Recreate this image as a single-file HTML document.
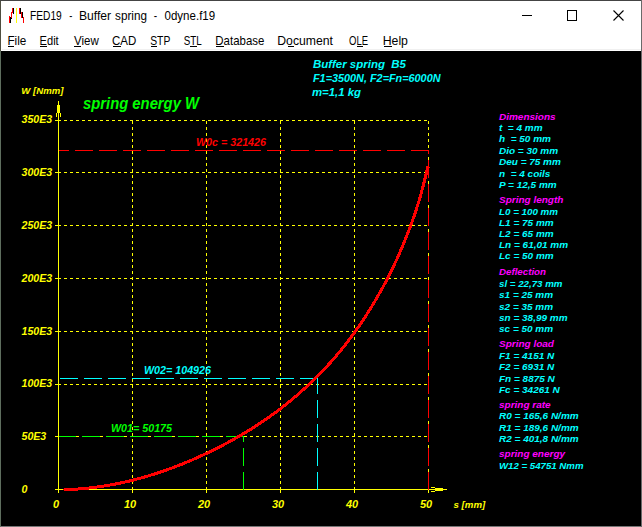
<!DOCTYPE html>
<html><head><meta charset="utf-8"><style>
html,body{margin:0;padding:0;width:642px;height:527px;overflow:hidden;background:#5e6e5e}
svg{position:absolute;left:0;top:0;display:block}
text{font-family:"Liberation Sans",sans-serif;white-space:pre}
</style></head><body>
<svg width="642" height="527" viewBox="0 0 642 527">
<rect x="0" y="0" width="642" height="527" fill="#5e6e5e"/>
<rect x="0" y="0" width="642" height="1" fill="#444"/>
<rect x="0" y="526" width="642" height="1" fill="#767676"/>
<rect x="0" y="1" width="1" height="50" fill="#4e4e40"/>
<rect x="0" y="51" width="1" height="476" fill="#5e6e5e"/>
<rect x="641" y="0" width="1" height="527" fill="#6a6a6a"/>
<rect x="1" y="1" width="640" height="50" fill="#fff"/>
<rect x="2" y="49" width="639" height="1" fill="#f0f0f0"/>
<rect x="1" y="51" width="640" height="475" fill="#000"/>
<g shape-rendering="crispEdges"><rect x="9" y="16" width="1" height="7" fill="#f00"/><rect x="10" y="17" width="1" height="6" fill="#000"/><rect x="11" y="12" width="1" height="6" fill="#f00"/><rect x="12" y="12" width="1" height="1" fill="#f00"/><rect x="12" y="8" width="1" height="5" fill="#f00"/><rect x="13" y="8" width="1" height="6" fill="#000"/><rect x="11" y="18" width="1" height="1" fill="#000"/><rect x="16" y="8" width="1" height="15" fill="#ff0"/><rect x="19" y="8" width="1" height="6" fill="#f00"/><rect x="20" y="8" width="1" height="6" fill="#000"/><rect x="21" y="12" width="1" height="6" fill="#f00"/><rect x="22" y="12" width="1" height="6" fill="#000"/><rect x="23" y="17" width="1" height="6" fill="#f00"/></g>
<g shape-rendering="crispEdges" fill="#000">
<rect x="522" y="15" width="10" height="1"/>
<rect x="567" y="10" width="10" height="1"/><rect x="567" y="20" width="10" height="1"/><rect x="567" y="10" width="1" height="11"/><rect x="576" y="10" width="1" height="11"/>
</g>
<path d="M613.5 10.5L623.5 20.5M623.5 10.5L613.5 20.5" stroke="#000" stroke-width="1.1"/>
<g font-size="12" fill="#000">
<text transform="translate(29.95,20) scale(0.853,1)">FED19</text>
<text transform="translate(69.3,20) scale(0.775,1)">-</text>
<text transform="translate(78.89,20) scale(1.013,1)">Buffer</text>
<text transform="translate(115.1,20) scale(0.975,1)">spring</text>
<text transform="translate(153.7,20) scale(0.85,1)">-</text>
<text transform="translate(164.5,20) scale(0.962,1)">0dyne.f19</text>
<text transform="translate(7.42,45) scale(0.978,1)">File</text>
<text transform="translate(39.58,45) scale(0.925,1)">Edit</text>
<text transform="translate(74.0,45) scale(0.962,1)">View</text>
<text transform="translate(112.04,45) scale(0.958,1)">CAD</text>
<text transform="translate(150.14,45) scale(0.864,1)">STP</text>
<text transform="translate(183.68,45) scale(0.819,1)">STL</text>
<text transform="translate(215.35,45) scale(0.954,1)">Database</text>
<text transform="translate(277.28,45) scale(1.019,1)">Document</text>
<text transform="translate(349.0,45) scale(0.792,1)">OLE</text>
<text transform="translate(382.67,45) scale(1.026,1)">Help</text>
<rect x="8" y="46" width="6" height="1"/>
<rect x="40" y="46" width="7" height="1"/>
<rect x="74" y="46" width="7" height="1"/>
<rect x="113" y="46" width="8" height="1"/>
<rect x="151" y="46" width="6" height="1"/>
<rect x="190" y="46" width="7" height="1"/>
<rect x="216" y="46" width="8" height="1"/>
<rect x="288" y="46" width="6" height="1"/>
<rect x="357" y="46" width="6" height="1"/>
<rect x="384" y="46" width="8" height="1"/>
</g>
<g shape-rendering="crispEdges">
<path fill="#ffff00" d="M55 120h6v1h-6zM64 120h3v1h-3zM70 120h3v1h-3zM76 120h3v1h-3zM82 120h3v1h-3zM88 120h3v1h-3zM94 120h3v1h-3zM100 120h3v1h-3zM106 120h3v1h-3zM112 120h3v1h-3zM118 120h3v1h-3zM124 120h3v1h-3zM130 120h3v1h-3zM136 120h3v1h-3zM142 120h3v1h-3zM148 120h3v1h-3zM154 120h3v1h-3zM160 120h3v1h-3zM166 120h3v1h-3zM172 120h3v1h-3zM178 120h3v1h-3zM184 120h3v1h-3zM190 120h3v1h-3zM196 120h3v1h-3zM202 120h3v1h-3zM208 120h3v1h-3zM214 120h3v1h-3zM220 120h3v1h-3zM226 120h3v1h-3zM232 120h3v1h-3zM238 120h3v1h-3zM244 120h3v1h-3zM250 120h3v1h-3zM256 120h3v1h-3zM262 120h3v1h-3zM268 120h3v1h-3zM274 120h3v1h-3zM280 120h3v1h-3zM286 120h3v1h-3zM292 120h3v1h-3zM298 120h3v1h-3zM304 120h3v1h-3zM310 120h3v1h-3zM316 120h3v1h-3zM322 120h3v1h-3zM328 120h3v1h-3zM334 120h3v1h-3zM340 120h3v1h-3zM346 120h3v1h-3zM352 120h3v1h-3zM358 120h3v1h-3zM364 120h3v1h-3zM370 120h3v1h-3zM376 120h3v1h-3zM382 120h3v1h-3zM388 120h3v1h-3zM394 120h3v1h-3zM400 120h3v1h-3zM406 120h3v1h-3zM412 120h3v1h-3zM418 120h3v1h-3zM424 120h3v1h-3zM55 172h6v1h-6zM64 172h3v1h-3zM70 172h3v1h-3zM76 172h3v1h-3zM82 172h3v1h-3zM88 172h3v1h-3zM94 172h3v1h-3zM100 172h3v1h-3zM106 172h3v1h-3zM112 172h3v1h-3zM118 172h3v1h-3zM124 172h3v1h-3zM130 172h3v1h-3zM136 172h3v1h-3zM142 172h3v1h-3zM148 172h3v1h-3zM154 172h3v1h-3zM160 172h3v1h-3zM166 172h3v1h-3zM172 172h3v1h-3zM178 172h3v1h-3zM184 172h3v1h-3zM190 172h3v1h-3zM196 172h3v1h-3zM202 172h3v1h-3zM208 172h3v1h-3zM214 172h3v1h-3zM220 172h3v1h-3zM226 172h3v1h-3zM232 172h3v1h-3zM238 172h3v1h-3zM244 172h3v1h-3zM250 172h3v1h-3zM256 172h3v1h-3zM262 172h3v1h-3zM268 172h3v1h-3zM274 172h3v1h-3zM280 172h3v1h-3zM286 172h3v1h-3zM292 172h3v1h-3zM298 172h3v1h-3zM304 172h3v1h-3zM310 172h3v1h-3zM316 172h3v1h-3zM322 172h3v1h-3zM328 172h3v1h-3zM334 172h3v1h-3zM340 172h3v1h-3zM346 172h3v1h-3zM352 172h3v1h-3zM358 172h3v1h-3zM364 172h3v1h-3zM370 172h3v1h-3zM376 172h3v1h-3zM382 172h3v1h-3zM388 172h3v1h-3zM394 172h3v1h-3zM400 172h3v1h-3zM406 172h3v1h-3zM412 172h3v1h-3zM418 172h3v1h-3zM424 172h3v1h-3zM55 225h6v1h-6zM64 225h3v1h-3zM70 225h3v1h-3zM76 225h3v1h-3zM82 225h3v1h-3zM88 225h3v1h-3zM94 225h3v1h-3zM100 225h3v1h-3zM106 225h3v1h-3zM112 225h3v1h-3zM118 225h3v1h-3zM124 225h3v1h-3zM130 225h3v1h-3zM136 225h3v1h-3zM142 225h3v1h-3zM148 225h3v1h-3zM154 225h3v1h-3zM160 225h3v1h-3zM166 225h3v1h-3zM172 225h3v1h-3zM178 225h3v1h-3zM184 225h3v1h-3zM190 225h3v1h-3zM196 225h3v1h-3zM202 225h3v1h-3zM208 225h3v1h-3zM214 225h3v1h-3zM220 225h3v1h-3zM226 225h3v1h-3zM232 225h3v1h-3zM238 225h3v1h-3zM244 225h3v1h-3zM250 225h3v1h-3zM256 225h3v1h-3zM262 225h3v1h-3zM268 225h3v1h-3zM274 225h3v1h-3zM280 225h3v1h-3zM286 225h3v1h-3zM292 225h3v1h-3zM298 225h3v1h-3zM304 225h3v1h-3zM310 225h3v1h-3zM316 225h3v1h-3zM322 225h3v1h-3zM328 225h3v1h-3zM334 225h3v1h-3zM340 225h3v1h-3zM346 225h3v1h-3zM352 225h3v1h-3zM358 225h3v1h-3zM364 225h3v1h-3zM370 225h3v1h-3zM376 225h3v1h-3zM382 225h3v1h-3zM388 225h3v1h-3zM394 225h3v1h-3zM400 225h3v1h-3zM406 225h3v1h-3zM412 225h3v1h-3zM418 225h3v1h-3zM424 225h3v1h-3zM55 278h6v1h-6zM64 278h3v1h-3zM70 278h3v1h-3zM76 278h3v1h-3zM82 278h3v1h-3zM88 278h3v1h-3zM94 278h3v1h-3zM100 278h3v1h-3zM106 278h3v1h-3zM112 278h3v1h-3zM118 278h3v1h-3zM124 278h3v1h-3zM130 278h3v1h-3zM136 278h3v1h-3zM142 278h3v1h-3zM148 278h3v1h-3zM154 278h3v1h-3zM160 278h3v1h-3zM166 278h3v1h-3zM172 278h3v1h-3zM178 278h3v1h-3zM184 278h3v1h-3zM190 278h3v1h-3zM196 278h3v1h-3zM202 278h3v1h-3zM208 278h3v1h-3zM214 278h3v1h-3zM220 278h3v1h-3zM226 278h3v1h-3zM232 278h3v1h-3zM238 278h3v1h-3zM244 278h3v1h-3zM250 278h3v1h-3zM256 278h3v1h-3zM262 278h3v1h-3zM268 278h3v1h-3zM274 278h3v1h-3zM280 278h3v1h-3zM286 278h3v1h-3zM292 278h3v1h-3zM298 278h3v1h-3zM304 278h3v1h-3zM310 278h3v1h-3zM316 278h3v1h-3zM322 278h3v1h-3zM328 278h3v1h-3zM334 278h3v1h-3zM340 278h3v1h-3zM346 278h3v1h-3zM352 278h3v1h-3zM358 278h3v1h-3zM364 278h3v1h-3zM370 278h3v1h-3zM376 278h3v1h-3zM382 278h3v1h-3zM388 278h3v1h-3zM394 278h3v1h-3zM400 278h3v1h-3zM406 278h3v1h-3zM412 278h3v1h-3zM418 278h3v1h-3zM424 278h3v1h-3zM55 331h6v1h-6zM64 331h3v1h-3zM70 331h3v1h-3zM76 331h3v1h-3zM82 331h3v1h-3zM88 331h3v1h-3zM94 331h3v1h-3zM100 331h3v1h-3zM106 331h3v1h-3zM112 331h3v1h-3zM118 331h3v1h-3zM124 331h3v1h-3zM130 331h3v1h-3zM136 331h3v1h-3zM142 331h3v1h-3zM148 331h3v1h-3zM154 331h3v1h-3zM160 331h3v1h-3zM166 331h3v1h-3zM172 331h3v1h-3zM178 331h3v1h-3zM184 331h3v1h-3zM190 331h3v1h-3zM196 331h3v1h-3zM202 331h3v1h-3zM208 331h3v1h-3zM214 331h3v1h-3zM220 331h3v1h-3zM226 331h3v1h-3zM232 331h3v1h-3zM238 331h3v1h-3zM244 331h3v1h-3zM250 331h3v1h-3zM256 331h3v1h-3zM262 331h3v1h-3zM268 331h3v1h-3zM274 331h3v1h-3zM280 331h3v1h-3zM286 331h3v1h-3zM292 331h3v1h-3zM298 331h3v1h-3zM304 331h3v1h-3zM310 331h3v1h-3zM316 331h3v1h-3zM322 331h3v1h-3zM328 331h3v1h-3zM334 331h3v1h-3zM340 331h3v1h-3zM346 331h3v1h-3zM352 331h3v1h-3zM358 331h3v1h-3zM364 331h3v1h-3zM370 331h3v1h-3zM376 331h3v1h-3zM382 331h3v1h-3zM388 331h3v1h-3zM394 331h3v1h-3zM400 331h3v1h-3zM406 331h3v1h-3zM412 331h3v1h-3zM418 331h3v1h-3zM424 331h3v1h-3zM55 384h6v1h-6zM64 384h3v1h-3zM70 384h3v1h-3zM76 384h3v1h-3zM82 384h3v1h-3zM88 384h3v1h-3zM94 384h3v1h-3zM100 384h3v1h-3zM106 384h3v1h-3zM112 384h3v1h-3zM118 384h3v1h-3zM124 384h3v1h-3zM130 384h3v1h-3zM136 384h3v1h-3zM142 384h3v1h-3zM148 384h3v1h-3zM154 384h3v1h-3zM160 384h3v1h-3zM166 384h3v1h-3zM172 384h3v1h-3zM178 384h3v1h-3zM184 384h3v1h-3zM190 384h3v1h-3zM196 384h3v1h-3zM202 384h3v1h-3zM208 384h3v1h-3zM214 384h3v1h-3zM220 384h3v1h-3zM226 384h3v1h-3zM232 384h3v1h-3zM238 384h3v1h-3zM244 384h3v1h-3zM250 384h3v1h-3zM256 384h3v1h-3zM262 384h3v1h-3zM268 384h3v1h-3zM274 384h3v1h-3zM280 384h3v1h-3zM286 384h3v1h-3zM292 384h3v1h-3zM298 384h3v1h-3zM304 384h3v1h-3zM310 384h3v1h-3zM316 384h3v1h-3zM322 384h3v1h-3zM328 384h3v1h-3zM334 384h3v1h-3zM340 384h3v1h-3zM346 384h3v1h-3zM352 384h3v1h-3zM358 384h3v1h-3zM364 384h3v1h-3zM370 384h3v1h-3zM376 384h3v1h-3zM382 384h3v1h-3zM388 384h3v1h-3zM394 384h3v1h-3zM400 384h3v1h-3zM406 384h3v1h-3zM412 384h3v1h-3zM418 384h3v1h-3zM424 384h3v1h-3zM55 436h6v1h-6zM64 436h3v1h-3zM70 436h3v1h-3zM76 436h3v1h-3zM82 436h3v1h-3zM88 436h3v1h-3zM94 436h3v1h-3zM100 436h3v1h-3zM106 436h3v1h-3zM112 436h3v1h-3zM118 436h3v1h-3zM124 436h3v1h-3zM130 436h3v1h-3zM136 436h3v1h-3zM142 436h3v1h-3zM148 436h3v1h-3zM154 436h3v1h-3zM160 436h3v1h-3zM166 436h3v1h-3zM172 436h3v1h-3zM178 436h3v1h-3zM184 436h3v1h-3zM190 436h3v1h-3zM196 436h3v1h-3zM202 436h3v1h-3zM208 436h3v1h-3zM214 436h3v1h-3zM220 436h3v1h-3zM226 436h3v1h-3zM232 436h3v1h-3zM238 436h3v1h-3zM244 436h3v1h-3zM250 436h3v1h-3zM256 436h3v1h-3zM262 436h3v1h-3zM268 436h3v1h-3zM274 436h3v1h-3zM280 436h3v1h-3zM286 436h3v1h-3zM292 436h3v1h-3zM298 436h3v1h-3zM304 436h3v1h-3zM310 436h3v1h-3zM316 436h3v1h-3zM322 436h3v1h-3zM328 436h3v1h-3zM334 436h3v1h-3zM340 436h3v1h-3zM346 436h3v1h-3zM352 436h3v1h-3zM358 436h3v1h-3zM364 436h3v1h-3zM370 436h3v1h-3zM376 436h3v1h-3zM382 436h3v1h-3zM388 436h3v1h-3zM394 436h3v1h-3zM400 436h3v1h-3zM406 436h3v1h-3zM412 436h3v1h-3zM418 436h3v1h-3zM424 436h3v1h-3zM132 489h1v4h-1zM132 121h1v3h-1zM132 127h1v3h-1zM132 133h1v3h-1zM132 139h1v3h-1zM132 145h1v3h-1zM132 151h1v3h-1zM132 157h1v3h-1zM132 163h1v3h-1zM132 169h1v3h-1zM132 175h1v3h-1zM132 181h1v3h-1zM132 187h1v3h-1zM132 193h1v3h-1zM132 199h1v3h-1zM132 205h1v3h-1zM132 211h1v3h-1zM132 217h1v3h-1zM132 223h1v3h-1zM132 229h1v3h-1zM132 235h1v3h-1zM132 241h1v3h-1zM132 247h1v3h-1zM132 253h1v3h-1zM132 259h1v3h-1zM132 265h1v3h-1zM132 271h1v3h-1zM132 277h1v3h-1zM132 283h1v3h-1zM132 289h1v3h-1zM132 295h1v3h-1zM132 301h1v3h-1zM132 307h1v3h-1zM132 313h1v3h-1zM132 319h1v3h-1zM132 325h1v3h-1zM132 331h1v3h-1zM132 337h1v3h-1zM132 343h1v3h-1zM132 349h1v3h-1zM132 355h1v3h-1zM132 361h1v3h-1zM132 367h1v3h-1zM132 373h1v3h-1zM132 379h1v3h-1zM132 385h1v3h-1zM132 391h1v3h-1zM132 397h1v3h-1zM132 403h1v3h-1zM132 409h1v3h-1zM132 415h1v3h-1zM132 421h1v3h-1zM132 427h1v3h-1zM132 433h1v3h-1zM132 439h1v3h-1zM132 445h1v3h-1zM132 451h1v3h-1zM132 457h1v3h-1zM132 463h1v3h-1zM132 469h1v3h-1zM132 475h1v3h-1zM132 481h1v3h-1zM132 487h1v2h-1zM206 489h1v4h-1zM206 121h1v3h-1zM206 127h1v3h-1zM206 133h1v3h-1zM206 139h1v3h-1zM206 145h1v3h-1zM206 151h1v3h-1zM206 157h1v3h-1zM206 163h1v3h-1zM206 169h1v3h-1zM206 175h1v3h-1zM206 181h1v3h-1zM206 187h1v3h-1zM206 193h1v3h-1zM206 199h1v3h-1zM206 205h1v3h-1zM206 211h1v3h-1zM206 217h1v3h-1zM206 223h1v3h-1zM206 229h1v3h-1zM206 235h1v3h-1zM206 241h1v3h-1zM206 247h1v3h-1zM206 253h1v3h-1zM206 259h1v3h-1zM206 265h1v3h-1zM206 271h1v3h-1zM206 277h1v3h-1zM206 283h1v3h-1zM206 289h1v3h-1zM206 295h1v3h-1zM206 301h1v3h-1zM206 307h1v3h-1zM206 313h1v3h-1zM206 319h1v3h-1zM206 325h1v3h-1zM206 331h1v3h-1zM206 337h1v3h-1zM206 343h1v3h-1zM206 349h1v3h-1zM206 355h1v3h-1zM206 361h1v3h-1zM206 367h1v3h-1zM206 373h1v3h-1zM206 379h1v3h-1zM206 385h1v3h-1zM206 391h1v3h-1zM206 397h1v3h-1zM206 403h1v3h-1zM206 409h1v3h-1zM206 415h1v3h-1zM206 421h1v3h-1zM206 427h1v3h-1zM206 433h1v3h-1zM206 439h1v3h-1zM206 445h1v3h-1zM206 451h1v3h-1zM206 457h1v3h-1zM206 463h1v3h-1zM206 469h1v3h-1zM206 475h1v3h-1zM206 481h1v3h-1zM206 487h1v2h-1zM280 489h1v4h-1zM280 121h1v3h-1zM280 127h1v3h-1zM280 133h1v3h-1zM280 139h1v3h-1zM280 145h1v3h-1zM280 151h1v3h-1zM280 157h1v3h-1zM280 163h1v3h-1zM280 169h1v3h-1zM280 175h1v3h-1zM280 181h1v3h-1zM280 187h1v3h-1zM280 193h1v3h-1zM280 199h1v3h-1zM280 205h1v3h-1zM280 211h1v3h-1zM280 217h1v3h-1zM280 223h1v3h-1zM280 229h1v3h-1zM280 235h1v3h-1zM280 241h1v3h-1zM280 247h1v3h-1zM280 253h1v3h-1zM280 259h1v3h-1zM280 265h1v3h-1zM280 271h1v3h-1zM280 277h1v3h-1zM280 283h1v3h-1zM280 289h1v3h-1zM280 295h1v3h-1zM280 301h1v3h-1zM280 307h1v3h-1zM280 313h1v3h-1zM280 319h1v3h-1zM280 325h1v3h-1zM280 331h1v3h-1zM280 337h1v3h-1zM280 343h1v3h-1zM280 349h1v3h-1zM280 355h1v3h-1zM280 361h1v3h-1zM280 367h1v3h-1zM280 373h1v3h-1zM280 379h1v3h-1zM280 385h1v3h-1zM280 391h1v3h-1zM280 397h1v3h-1zM280 403h1v3h-1zM280 409h1v3h-1zM280 415h1v3h-1zM280 421h1v3h-1zM280 427h1v3h-1zM280 433h1v3h-1zM280 439h1v3h-1zM280 445h1v3h-1zM280 451h1v3h-1zM280 457h1v3h-1zM280 463h1v3h-1zM280 469h1v3h-1zM280 475h1v3h-1zM280 481h1v3h-1zM280 487h1v2h-1zM354 489h1v4h-1zM354 121h1v3h-1zM354 127h1v3h-1zM354 133h1v3h-1zM354 139h1v3h-1zM354 145h1v3h-1zM354 151h1v3h-1zM354 157h1v3h-1zM354 163h1v3h-1zM354 169h1v3h-1zM354 175h1v3h-1zM354 181h1v3h-1zM354 187h1v3h-1zM354 193h1v3h-1zM354 199h1v3h-1zM354 205h1v3h-1zM354 211h1v3h-1zM354 217h1v3h-1zM354 223h1v3h-1zM354 229h1v3h-1zM354 235h1v3h-1zM354 241h1v3h-1zM354 247h1v3h-1zM354 253h1v3h-1zM354 259h1v3h-1zM354 265h1v3h-1zM354 271h1v3h-1zM354 277h1v3h-1zM354 283h1v3h-1zM354 289h1v3h-1zM354 295h1v3h-1zM354 301h1v3h-1zM354 307h1v3h-1zM354 313h1v3h-1zM354 319h1v3h-1zM354 325h1v3h-1zM354 331h1v3h-1zM354 337h1v3h-1zM354 343h1v3h-1zM354 349h1v3h-1zM354 355h1v3h-1zM354 361h1v3h-1zM354 367h1v3h-1zM354 373h1v3h-1zM354 379h1v3h-1zM354 385h1v3h-1zM354 391h1v3h-1zM354 397h1v3h-1zM354 403h1v3h-1zM354 409h1v3h-1zM354 415h1v3h-1zM354 421h1v3h-1zM354 427h1v3h-1zM354 433h1v3h-1zM354 439h1v3h-1zM354 445h1v3h-1zM354 451h1v3h-1zM354 457h1v3h-1zM354 463h1v3h-1zM354 469h1v3h-1zM354 475h1v3h-1zM354 481h1v3h-1zM354 487h1v2h-1zM428 489h1v4h-1zM428 121h1v3h-1zM428 127h1v3h-1zM428 133h1v3h-1zM428 139h1v3h-1zM428 145h1v3h-1zM428 151h1v3h-1zM428 157h1v3h-1zM428 163h1v3h-1zM428 169h1v3h-1zM428 175h1v3h-1zM428 181h1v3h-1zM428 187h1v3h-1zM428 193h1v3h-1zM428 199h1v3h-1zM428 205h1v3h-1zM428 211h1v3h-1zM428 217h1v3h-1zM428 223h1v3h-1zM428 229h1v3h-1zM428 235h1v3h-1zM428 241h1v3h-1zM428 247h1v3h-1zM428 253h1v3h-1zM428 259h1v3h-1zM428 265h1v3h-1zM428 271h1v3h-1zM428 277h1v3h-1zM428 283h1v3h-1zM428 289h1v3h-1zM428 295h1v3h-1zM428 301h1v3h-1zM428 307h1v3h-1zM428 313h1v3h-1zM428 319h1v3h-1zM428 325h1v3h-1zM428 331h1v3h-1zM428 337h1v3h-1zM428 343h1v3h-1zM428 349h1v3h-1zM428 355h1v3h-1zM428 361h1v3h-1zM428 367h1v3h-1zM428 373h1v3h-1zM428 379h1v3h-1zM428 385h1v3h-1zM428 391h1v3h-1zM428 397h1v3h-1zM428 403h1v3h-1zM428 409h1v3h-1zM428 415h1v3h-1zM428 421h1v3h-1zM428 427h1v3h-1zM428 433h1v3h-1zM428 439h1v3h-1zM428 445h1v3h-1zM428 451h1v3h-1zM428 457h1v3h-1zM428 463h1v3h-1zM428 469h1v3h-1zM428 475h1v3h-1zM428 481h1v3h-1zM428 487h1v2h-1zM58 101h1v392h-1zM55 489h392v1h-392zM57 105h3v8h-3zM56 113h1v4h-1zM60 113h1v4h-1zM435 488h8v3h-8zM431 487h4v1h-4zM431 491h4v1h-4z"/>
<path fill="#ff0000" d="M411 150h18v1h-18zM387 150h18v1h-18zM363 150h18v1h-18zM339 150h18v1h-18zM315 150h18v1h-18zM291 150h18v1h-18zM267 150h18v1h-18zM243 150h18v1h-18zM219 150h18v1h-18zM195 150h18v1h-18zM171 150h18v1h-18zM147 150h18v1h-18zM123 150h18v1h-18zM99 150h18v1h-18zM75 150h18v1h-18zM59 150h10v1h-10zM428 472h1v18h-1zM428 448h1v18h-1zM428 424h1v18h-1zM428 400h1v18h-1zM428 376h1v18h-1zM428 352h1v18h-1zM428 328h1v18h-1zM428 304h1v18h-1zM428 280h1v18h-1zM428 256h1v18h-1zM428 232h1v18h-1zM428 208h1v18h-1zM428 184h1v18h-1zM428 160h1v18h-1zM428 150h1v4h-1z"/>
<path fill="#00ffff" d="M300 378h18v1h-18zM276 378h18v1h-18zM252 378h18v1h-18zM228 378h18v1h-18zM204 378h18v1h-18zM180 378h18v1h-18zM156 378h18v1h-18zM132 378h18v1h-18zM108 378h18v1h-18zM84 378h18v1h-18zM60 378h18v1h-18zM317 472h1v18h-1zM317 448h1v18h-1zM317 424h1v18h-1zM317 400h1v18h-1zM317 378h1v16h-1z"/>
<path fill="#00ff00" d="M226 436h18v1h-18zM202 436h18v1h-18zM178 436h18v1h-18zM154 436h18v1h-18zM130 436h18v1h-18zM106 436h18v1h-18zM82 436h18v1h-18zM59 436h17v1h-17zM243 472h1v18h-1zM243 448h1v18h-1zM243 436h1v6h-1z"/>
<path d="M64.00 489.71 L64.70 489.69 L65.40 489.67 L66.10 489.65 L66.80 489.62 L67.50 489.60 L68.20 489.57 L68.90 489.54 L69.60 489.51 L70.30 489.48 L71.00 489.44 L71.70 489.41 L72.40 489.37 L73.10 489.33 L73.80 489.29 L74.50 489.25 L75.20 489.21 L75.90 489.16 L76.60 489.12 L77.30 489.07 L78.00 489.02 L78.70 488.97 L79.40 488.91 L80.10 488.86 L80.80 488.80 L81.50 488.75 L82.20 488.69 L82.90 488.63 L83.60 488.56 L84.30 488.50 L85.00 488.43 L85.70 488.36 L86.40 488.30 L87.10 488.22 L87.80 488.15 L88.50 488.08 L89.20 488.00 L89.90 487.93 L90.60 487.85 L91.30 487.77 L92.00 487.68 L92.70 487.60 L93.40 487.52 L94.10 487.43 L94.80 487.34 L95.50 487.25 L96.20 487.16 L96.90 487.07 L97.60 486.97 L98.30 486.87 L99.00 486.78 L99.70 486.68 L100.40 486.58 L101.10 486.47 L101.80 486.37 L102.50 486.26 L103.20 486.16 L103.90 486.05 L104.60 485.94 L105.30 485.82 L106.00 485.71 L106.70 485.59 L107.40 485.48 L108.10 485.36 L108.80 485.24 L109.50 485.12 L110.20 484.99 L110.90 484.87 L111.60 484.74 L112.30 484.61 L113.00 484.48 L113.70 484.35 L114.40 484.22 L115.10 484.09 L115.80 483.95 L116.50 483.81 L117.20 483.67 L117.90 483.53 L118.60 483.39 L119.30 483.25 L120.00 483.10 L120.70 482.95 L121.40 482.81 L122.10 482.65 L122.80 482.50 L123.50 482.35 L124.20 482.20 L124.90 482.04 L125.60 481.88 L126.30 481.72 L127.00 481.56 L127.70 481.40 L128.40 481.23 L129.10 481.07 L129.80 480.90 L130.50 480.73 L131.20 480.56 L131.90 480.39 L132.60 480.22 L133.30 480.04 L134.00 479.86 L134.70 479.69 L135.40 479.51 L136.10 479.33 L136.80 479.14 L137.50 478.96 L138.20 478.77 L138.90 478.59 L139.60 478.40 L140.30 478.21 L141.00 478.01 L141.70 477.82 L142.40 477.63 L143.10 477.43 L143.80 477.23 L144.50 477.03 L145.20 476.83 L145.90 476.63 L146.60 476.42 L147.30 476.22 L148.00 476.01 L148.70 475.80 L149.40 475.59 L150.10 475.38 L150.80 475.16 L151.50 474.95 L152.20 474.73 L152.90 474.51 L153.60 474.29 L154.30 474.07 L155.00 473.85 L155.70 473.63 L156.40 473.40 L157.10 473.17 L157.80 472.94 L158.50 472.71 L159.20 472.48 L159.90 472.25 L160.60 472.01 L161.30 471.78 L162.00 471.54 L162.70 471.30 L163.40 471.06 L164.10 470.82 L164.80 470.57 L165.50 470.33 L166.20 470.08 L166.90 469.83 L167.60 469.58 L168.30 469.33 L169.00 469.08 L169.70 468.82 L170.40 468.57 L171.10 468.31 L171.80 468.05 L172.50 467.79 L173.20 467.53 L173.90 467.26 L174.60 467.00 L175.30 466.73 L176.00 466.46 L176.70 466.19 L177.40 465.92 L178.10 465.65 L178.80 465.38 L179.50 465.10 L180.20 464.82 L180.90 464.55 L181.60 464.27 L182.30 463.98 L183.00 463.70 L183.70 463.42 L184.40 463.13 L185.10 462.84 L185.80 462.55 L186.50 462.26 L187.20 461.97 L187.90 461.68 L188.60 461.38 L189.30 461.09 L190.00 460.79 L190.70 460.49 L191.40 460.19 L192.10 459.89 L192.80 459.58 L193.50 459.28 L194.20 458.97 L194.90 458.66 L195.60 458.35 L196.30 458.04 L197.00 457.73 L197.70 457.41 L198.40 457.10 L199.10 456.78 L199.80 456.46 L200.50 456.14 L201.20 455.82 L201.90 455.50 L202.60 455.17 L203.30 454.85 L204.00 454.52 L204.70 454.19 L205.40 453.86 L206.10 453.53 L206.80 453.20 L207.50 452.86 L208.20 452.53 L208.90 452.19 L209.60 451.85 L210.30 451.51 L211.00 451.17 L211.70 450.82 L212.40 450.48 L213.10 450.13 L213.80 449.78 L214.50 449.44 L215.20 449.08 L215.90 448.73 L216.60 448.38 L217.30 448.02 L218.00 447.67 L218.70 447.31 L219.40 446.95 L220.10 446.59 L220.80 446.23 L221.50 445.86 L222.20 445.50 L222.90 445.13 L223.60 444.76 L224.30 444.39 L225.00 444.02 L225.70 443.65 L226.40 443.28 L227.10 442.90 L227.80 442.52 L228.50 442.14 L229.20 441.76 L229.90 441.38 L230.60 441.00 L231.30 440.62 L232.00 440.23 L232.70 439.84 L233.40 439.45 L234.10 439.06 L234.80 438.67 L235.50 438.27 L236.20 437.88 L236.90 437.48 L237.60 437.08 L238.30 436.68 L239.00 436.27 L239.70 435.87 L240.40 435.46 L241.10 435.05 L241.80 434.64 L242.50 434.23 L243.20 433.81 L243.90 433.40 L244.60 432.98 L245.30 432.56 L246.00 432.14 L246.70 431.72 L247.40 431.29 L248.10 430.86 L248.80 430.43 L249.50 430.00 L250.20 429.57 L250.90 429.13 L251.60 428.69 L252.30 428.25 L253.00 427.81 L253.70 427.37 L254.40 426.92 L255.10 426.47 L255.80 426.02 L256.50 425.57 L257.20 425.12 L257.90 424.66 L258.60 424.20 L259.30 423.74 L260.00 423.28 L260.70 422.81 L261.40 422.34 L262.10 421.87 L262.80 421.40 L263.50 420.93 L264.20 420.45 L264.90 419.97 L265.60 419.49 L266.30 419.00 L267.00 418.52 L267.70 418.03 L268.40 417.54 L269.10 417.04 L269.80 416.55 L270.50 416.05 L271.20 415.55 L271.90 415.05 L272.60 414.54 L273.30 414.03 L274.00 413.52 L274.70 413.01 L275.40 412.49 L276.10 411.97 L276.80 411.45 L277.50 410.93 L278.20 410.40 L278.90 409.87 L279.60 409.34 L280.30 408.81 L281.00 408.27 L281.70 407.73 L282.40 407.19 L283.10 406.64 L283.80 406.09 L284.50 405.54 L285.20 404.99 L285.90 404.43 L286.60 403.87 L287.30 403.31 L288.00 402.75 L288.70 402.18 L289.40 401.61 L290.10 401.04 L290.80 400.46 L291.50 399.88 L292.20 399.30 L292.90 398.71 L293.60 398.13 L294.30 397.54 L295.00 396.94 L295.70 396.35 L296.40 395.75 L297.10 395.14 L297.80 394.54 L298.50 393.93 L299.20 393.32 L299.90 392.70 L300.60 392.08 L301.30 391.46 L302.00 390.84 L302.70 390.21 L303.40 389.58 L304.10 388.95 L304.80 388.31 L305.50 387.67 L306.20 387.02 L306.90 386.38 L307.60 385.73 L308.30 385.07 L309.00 384.42 L309.70 383.76 L310.40 383.09 L311.10 382.43 L311.80 381.76 L312.50 381.08 L313.20 380.41 L313.90 379.73 L314.60 379.04 L315.30 378.35 L316.00 377.66 L316.70 376.97 L317.40 376.27 L318.10 375.57 L318.79 374.86 L319.49 374.16 L320.17 373.46 L320.86 372.76 L321.54 372.06 L322.21 371.36 L322.88 370.65 L323.55 369.95 L324.22 369.25 L324.88 368.55 L325.54 367.85 L326.19 367.14 L326.84 366.44 L327.49 365.74 L328.13 365.04 L328.77 364.34 L329.41 363.63 L330.04 362.93 L330.67 362.23 L331.30 361.53 L331.92 360.83 L332.54 360.12 L333.15 359.42 L333.77 358.72 L334.37 358.02 L334.98 357.32 L335.58 356.61 L336.18 355.91 L336.78 355.21 L337.37 354.51 L337.96 353.81 L338.55 353.11 L339.13 352.40 L339.71 351.70 L340.29 351.00 L340.86 350.30 L341.43 349.60 L342.00 348.89 L342.57 348.19 L343.13 347.49 L343.69 346.79 L344.25 346.09 L344.80 345.39 L345.35 344.68 L345.90 343.98 L346.44 343.28 L346.99 342.58 L347.53 341.88 L348.06 341.17 L348.60 340.47 L349.13 339.77 L349.66 339.07 L350.19 338.37 L350.71 337.67 L351.23 336.96 L351.75 336.26 L352.27 335.56 L352.78 334.86 L353.29 334.16 L353.80 333.46 L354.31 332.75 L354.81 332.05 L355.31 331.35 L355.81 330.65 L356.31 329.95 L356.80 329.25 L357.30 328.54 L357.79 327.84 L358.27 327.14 L358.76 326.44 L359.24 325.74 L359.72 325.04 L360.20 324.33 L360.68 323.63 L361.15 322.93 L361.63 322.23 L362.10 321.53 L362.56 320.83 L363.03 320.13 L363.49 319.42 L363.96 318.72 L364.42 318.02 L364.87 317.32 L365.33 316.62 L365.78 315.92 L366.24 315.21 L366.69 314.51 L367.13 313.81 L367.58 313.11 L368.03 312.41 L368.47 311.71 L368.91 311.01 L369.35 310.30 L369.78 309.60 L370.22 308.90 L370.65 308.20 L371.08 307.50 L371.51 306.80 L371.94 306.10 L372.37 305.39 L372.79 304.69 L373.22 303.99 L373.64 303.29 L374.06 302.59 L374.48 301.89 L374.89 301.19 L375.31 300.48 L375.72 299.78 L376.13 299.08 L376.54 298.38 L376.95 297.68 L377.35 296.98 L377.76 296.28 L378.16 295.57 L378.56 294.87 L378.96 294.17 L379.36 293.47 L379.76 292.77 L380.15 292.07 L380.55 291.37 L380.94 290.66 L381.33 289.96 L381.72 289.26 L382.10 288.56 L382.49 287.86 L382.87 287.16 L383.25 286.46 L383.63 285.75 L384.01 285.05 L384.39 284.35 L384.76 283.65 L385.14 282.95 L385.51 282.25 L385.88 281.54 L386.25 280.84 L386.62 280.14 L386.98 279.44 L387.34 278.74 L387.71 278.04 L388.07 277.33 L388.43 276.63 L388.78 275.93 L389.14 275.23 L389.49 274.53 L389.84 273.83 L390.19 273.13 L390.54 272.42 L390.89 271.72 L391.24 271.02 L391.58 270.32 L391.92 269.62 L392.27 268.92 L392.61 268.21 L392.94 267.51 L393.28 266.81 L393.62 266.11 L393.95 265.41 L394.28 264.71 L394.61 264.00 L394.94 263.30 L395.27 262.60 L395.60 261.90 L395.92 261.20 L396.24 260.50 L396.57 259.80 L396.89 259.09 L397.20 258.39 L397.52 257.69 L397.84 256.99 L398.15 256.29 L398.47 255.59 L398.78 254.88 L399.09 254.18 L399.40 253.48 L399.71 252.78 L400.01 252.08 L400.32 251.38 L400.62 250.68 L400.93 249.97 L401.23 249.27 L401.53 248.57 L401.83 247.87 L402.12 247.17 L402.42 246.47 L402.71 245.76 L403.01 245.06 L403.30 244.36 L403.59 243.66 L403.88 242.96 L404.17 242.26 L404.46 241.56 L404.74 240.85 L405.03 240.15 L405.31 239.45 L405.60 238.75 L405.88 238.05 L406.16 237.35 L406.44 236.65 L406.72 235.94 L406.99 235.24 L407.27 234.54 L407.54 233.84 L407.82 233.14 L408.09 232.44 L408.36 231.74 L408.63 231.03 L408.90 230.33 L409.17 229.63 L409.44 228.93 L409.70 228.23 L409.97 227.53 L410.23 226.83 L410.49 226.12 L410.75 225.42 L411.01 224.72 L411.27 224.02 L411.53 223.32 L411.78 222.61 L412.04 221.91 L412.29 221.21 L412.54 220.51 L412.79 219.81 L413.04 219.10 L413.28 218.40 L413.53 217.70 L413.77 217.00 L414.02 216.30 L414.26 215.59 L414.50 214.89 L414.74 214.19 L414.97 213.49 L415.21 212.79 L415.44 212.08 L415.67 211.38 L415.91 210.68 L416.13 209.98 L416.36 209.27 L416.59 208.57 L416.81 207.87 L417.04 207.17 L417.26 206.46 L417.48 205.76 L417.70 205.06 L417.92 204.36 L418.13 203.66 L418.35 202.95 L418.56 202.25 L418.77 201.55 L418.98 200.85 L419.19 200.14 L419.40 199.44 L419.61 198.74 L419.81 198.04 L420.02 197.34 L420.22 196.63 L420.42 195.93 L420.62 195.23 L420.82 194.53 L421.02 193.82 L421.21 193.12 L421.41 192.42 L421.60 191.72 L421.79 191.01 L421.99 190.31 L422.18 189.61 L422.36 188.91 L422.55 188.21 L422.74 187.50 L422.92 186.80 L423.11 186.10 L423.29 185.40 L423.47 184.69 L423.65 183.99 L423.83 183.29 L424.01 182.59 L424.19 181.89 L424.36 181.18 L424.54 180.48 L424.71 179.78 L424.89 179.08 L425.06 178.38 L425.23 177.67 L425.40 176.97 L425.57 176.27 L425.74 175.57 L425.90 174.87 L426.07 174.16 L426.24 173.46 L426.40 172.76 L426.56 172.06 L426.73 171.36 L426.89 170.65 L427.05 169.95 L427.21 169.25 L427.36 168.55 L427.50 167.95 L427.80 166.00" fill="none" stroke="#ff0000" stroke-width="3" stroke-linejoin="round" stroke-linecap="butt"/>
<path d="M240.40 435.46 L241.10 435.05 L241.80 434.64 L242.50 434.23 L243.20 433.81 L243.90 433.40 L244.60 432.98 L245.30 432.56 L246.00 432.14 L246.70 431.72 L247.40 431.29 L248.10 430.86 L248.80 430.43 L249.50 430.00 L250.20 429.57 L250.90 429.13 L251.60 428.69 L252.30 428.25 L253.00 427.81 L253.70 427.37 L254.40 426.92 L255.10 426.47 L255.80 426.02 L256.50 425.57 L257.20 425.12 L257.90 424.66 L258.60 424.20 L259.30 423.74 L260.00 423.28 L260.70 422.81 L261.40 422.34 L262.10 421.87 L262.80 421.40 L263.50 420.93 L264.20 420.45 L264.90 419.97 L265.60 419.49 L266.30 419.00 L267.00 418.52 L267.70 418.03 L268.40 417.54 L269.10 417.04 L269.80 416.55 L270.50 416.05 L271.20 415.55 L271.90 415.05 L272.60 414.54 L273.30 414.03 L274.00 413.52 L274.70 413.01 L275.40 412.49 L276.10 411.97 L276.80 411.45 L277.50 410.93 L278.20 410.40 L278.90 409.87 L279.60 409.34 L280.30 408.81 L281.00 408.27 L281.70 407.73 L282.40 407.19 L283.10 406.64 L283.80 406.09 L284.50 405.54 L285.20 404.99 L285.90 404.43 L286.60 403.87 L287.30 403.31 L288.00 402.75 L288.70 402.18 L289.40 401.61 L290.10 401.04 L290.80 400.46 L291.50 399.88 L292.20 399.30 L292.90 398.71 L293.60 398.13 L294.30 397.54 L295.00 396.94 L295.70 396.35 L296.40 395.75 L297.10 395.14 L297.80 394.54 L298.50 393.93 L299.20 393.32 L299.90 392.70 L300.60 392.08 L301.30 391.46 L302.00 390.84 L302.70 390.21 L303.40 389.58 L304.10 388.95 L304.80 388.31 L305.50 387.67 L306.20 387.02 L306.90 386.38 L307.60 385.73 L308.30 385.07 L309.00 384.42 L309.70 383.76 L310.40 383.09 L311.10 382.43 L311.80 381.76 L312.50 381.08 L313.20 380.41 L313.90 379.73 L314.60 379.04 L315.30 378.35 L316.00 377.66 L316.70 376.97 L317.40 376.27 L318.10 375.57 L318.79 374.86 L319.49 374.16 L320.17 373.46 L320.86 372.76 L321.54 372.06 L322.21 371.36 L322.88 370.65 L323.55 369.95 L324.22 369.25 L324.88 368.55 L325.54 367.85 L326.19 367.14 L326.84 366.44 L327.49 365.74 L328.13 365.04 L328.77 364.34 L329.41 363.63 L330.04 362.93 L330.67 362.23 L331.30 361.53 L331.92 360.83 L332.54 360.12 L333.15 359.42 L333.77 358.72 L334.37 358.02 L334.98 357.32 L335.58 356.61 L336.18 355.91 L336.78 355.21 L337.37 354.51 L337.96 353.81 L338.55 353.11 L339.13 352.40 L339.71 351.70 L340.29 351.00 L340.86 350.30 L341.43 349.60 L342.00 348.89 L342.57 348.19 L343.13 347.49 L343.69 346.79 L344.25 346.09 L344.80 345.39 L345.35 344.68 L345.90 343.98 L346.44 343.28 L346.99 342.58 L347.53 341.88 L348.06 341.17 L348.60 340.47 L349.13 339.77 L349.66 339.07 L350.19 338.37 L350.71 337.67 L351.23 336.96 L351.75 336.26 L352.27 335.56 L352.78 334.86 L353.29 334.16 L353.80 333.46 L354.31 332.75 L354.81 332.05 L355.31 331.35 L355.81 330.65 L356.31 329.95 L356.80 329.25 L357.30 328.54 L357.79 327.84 L358.27 327.14 L358.76 326.44 L359.24 325.74 L359.72 325.04 L360.20 324.33 L360.68 323.63 L361.15 322.93 L361.63 322.23 L362.10 321.53 L362.56 320.83 L363.03 320.13 L363.49 319.42 L363.96 318.72 L364.42 318.02 L364.87 317.32 L365.33 316.62 L365.78 315.92 L366.24 315.21 L366.69 314.51 L367.13 313.81 L367.58 313.11 L368.03 312.41 L368.47 311.71 L368.91 311.01 L369.35 310.30 L369.78 309.60 L370.22 308.90 L370.65 308.20 L371.08 307.50 L371.51 306.80 L371.94 306.10 L372.37 305.39 L372.79 304.69 L373.22 303.99 L373.64 303.29 L374.06 302.59 L374.48 301.89 L374.89 301.19 L375.31 300.48 L375.72 299.78 L376.13 299.08 L376.54 298.38 L376.95 297.68 L377.35 296.98 L377.76 296.28 L378.16 295.57 L378.56 294.87 L378.96 294.17 L379.36 293.47 L379.76 292.77 L380.15 292.07 L380.55 291.37 L380.94 290.66 L381.33 289.96 L381.72 289.26 L382.10 288.56 L382.49 287.86 L382.87 287.16 L383.25 286.46 L383.63 285.75 L384.01 285.05 L384.39 284.35 L384.76 283.65 L385.14 282.95 L385.51 282.25 L385.88 281.54 L386.25 280.84 L386.62 280.14 L386.98 279.44 L387.34 278.74 L387.71 278.04 L388.07 277.33 L388.43 276.63 L388.78 275.93 L389.14 275.23 L389.49 274.53 L389.84 273.83 L390.19 273.13 L390.54 272.42 L390.89 271.72 L391.24 271.02 L391.58 270.32 L391.92 269.62 L392.27 268.92 L392.61 268.21 L392.94 267.51 L393.28 266.81 L393.62 266.11 L393.95 265.41 L394.28 264.71 L394.61 264.00 L394.94 263.30 L395.27 262.60 L395.60 261.90 L395.92 261.20 L396.24 260.50 L396.57 259.80 L396.89 259.09 L397.20 258.39 L397.52 257.69 L397.84 256.99 L398.15 256.29 L398.47 255.59 L398.78 254.88 L399.09 254.18 L399.40 253.48 L399.71 252.78 L400.01 252.08 L400.32 251.38 L400.62 250.68 L400.93 249.97 L401.23 249.27 L401.53 248.57 L401.83 247.87 L402.12 247.17 L402.42 246.47 L402.71 245.76 L403.01 245.06 L403.30 244.36 L403.59 243.66 L403.88 242.96 L404.17 242.26 L404.46 241.56 L404.74 240.85 L405.03 240.15 L405.31 239.45 L405.60 238.75 L405.88 238.05 L406.16 237.35 L406.44 236.65 L406.72 235.94 L406.99 235.24 L407.27 234.54 L407.54 233.84 L407.82 233.14 L408.09 232.44 L408.36 231.74 L408.63 231.03 L408.90 230.33 L409.17 229.63 L409.44 228.93 L409.70 228.23 L409.97 227.53 L410.23 226.83 L410.49 226.12 L410.75 225.42 L411.01 224.72 L411.27 224.02 L411.53 223.32 L411.78 222.61 L412.04 221.91 L412.29 221.21 L412.54 220.51 L412.79 219.81 L413.04 219.10 L413.28 218.40 L413.53 217.70 L413.77 217.00 L414.02 216.30 L414.26 215.59 L414.50 214.89 L414.74 214.19 L414.97 213.49 L415.21 212.79 L415.44 212.08 L415.67 211.38 L415.91 210.68 L416.13 209.98 L416.36 209.27 L416.59 208.57 L416.81 207.87 L417.04 207.17 L417.26 206.46 L417.48 205.76 L417.70 205.06 L417.92 204.36 L418.13 203.66 L418.35 202.95 L418.56 202.25 L418.77 201.55 L418.98 200.85 L419.19 200.14 L419.40 199.44 L419.61 198.74 L419.81 198.04 L420.02 197.34 L420.22 196.63 L420.42 195.93 L420.62 195.23 L420.82 194.53 L421.02 193.82 L421.21 193.12 L421.41 192.42 L421.60 191.72 L421.79 191.01 L421.99 190.31 L422.18 189.61 L422.36 188.91 L422.55 188.21 L422.74 187.50 L422.92 186.80 L423.11 186.10 L423.29 185.40 L423.47 184.69 L423.65 183.99 L423.83 183.29 L424.01 182.59 L424.19 181.89 L424.36 181.18 L424.54 180.48 L424.71 179.78 L424.89 179.08 L425.06 178.38 L425.23 177.67 L425.40 176.97 L425.57 176.27 L425.74 175.57 L425.90 174.87 L426.07 174.16 L426.24 173.46 L426.40 172.76 L426.56 172.06 L426.73 171.36 L426.89 170.65 L427.05 169.95 L427.21 169.25 L427.36 168.55 L427.50 167.95 L427.80 166.00" fill="none" stroke="#ff0000" stroke-width="3.0" stroke-linejoin="round" stroke-linecap="butt"/>
<path fill="#ff0000" d="M63 489h1v1h-1z M429 167h1v1h-1z"/>
</g>
<text transform="translate(21.5,123) scale(0.965,0.95)" fill="#ffff00" font-size="11" font-weight="bold" font-style="italic">350E3</text>
<text transform="translate(21.5,176) scale(0.965,0.95)" fill="#ffff00" font-size="11" font-weight="bold" font-style="italic">300E3</text>
<text transform="translate(21.5,229) scale(0.965,0.95)" fill="#ffff00" font-size="11" font-weight="bold" font-style="italic">250E3</text>
<text transform="translate(21.5,282) scale(0.965,0.95)" fill="#ffff00" font-size="11" font-weight="bold" font-style="italic">200E3</text>
<text transform="translate(21.5,335) scale(0.965,0.95)" fill="#ffff00" font-size="11" font-weight="bold" font-style="italic">150E3</text>
<text transform="translate(21.5,387) scale(0.965,0.95)" fill="#ffff00" font-size="11" font-weight="bold" font-style="italic">100E3</text>
<text transform="translate(21.5,440) scale(0.965,0.95)" fill="#ffff00" font-size="11" font-weight="bold" font-style="italic">50E3</text>
<text transform="translate(21.5,493) scale(0.965,0.95)" fill="#ffff00" font-size="11" font-weight="bold" font-style="italic">0</text>
<text transform="translate(56,508) scale(1.0,0.95)" fill="#ffff00" font-size="11" font-weight="bold" font-style="italic" text-anchor="middle">0</text>
<text transform="translate(130,508) scale(1.0,0.95)" fill="#ffff00" font-size="11" font-weight="bold" font-style="italic" text-anchor="middle">10</text>
<text transform="translate(204,508) scale(1.0,0.95)" fill="#ffff00" font-size="11" font-weight="bold" font-style="italic" text-anchor="middle">20</text>
<text transform="translate(278,508) scale(1.0,0.95)" fill="#ffff00" font-size="11" font-weight="bold" font-style="italic" text-anchor="middle">30</text>
<text transform="translate(352,508) scale(1.0,0.95)" fill="#ffff00" font-size="11" font-weight="bold" font-style="italic" text-anchor="middle">40</text>
<text transform="translate(426,508) scale(1.0,0.95)" fill="#ffff00" font-size="11" font-weight="bold" font-style="italic" text-anchor="middle">50</text>
<text transform="translate(21.3,94) scale(0.96,0.92)" fill="#ffff00" font-size="10" font-weight="bold" font-style="italic">W [Nmm]</text>
<text transform="translate(453.5,508) scale(0.97,0.9)" fill="#ffff00" font-size="10" font-weight="bold" font-style="italic">s [mm]</text>
<text transform="translate(83,109) scale(1.0,1.1)" fill="#00ff00" font-size="15" font-weight="bold" font-style="italic" textLength="116" lengthAdjust="spacingAndGlyphs">spring energy W</text>
<text transform="translate(313,68) scale(1.0,1.0)" fill="#00ffff" font-size="11" font-weight="bold" font-style="italic" textLength="93" lengthAdjust="spacingAndGlyphs">Buffer spring  B5</text>
<text transform="translate(313,82) scale(1.0,1.0)" fill="#00ffff" font-size="11" font-weight="bold" font-style="italic" textLength="127.5" lengthAdjust="spacingAndGlyphs">F1=3500N, F2=Fn=6000N</text>
<text transform="translate(312,96) scale(1.0,1.0)" fill="#00ffff" font-size="11" font-weight="bold" font-style="italic" textLength="49" lengthAdjust="spacingAndGlyphs">m=1,1 kg</text>
<text transform="translate(196,146) scale(1.0,1.0)" fill="#ff0000" font-size="10" font-weight="bold" font-style="italic" textLength="70" lengthAdjust="spacingAndGlyphs">W0c = 321426</text>
<text transform="translate(144,374) scale(1.0,1.0)" fill="#00ffff" font-size="10" font-weight="bold" font-style="italic" textLength="67" lengthAdjust="spacingAndGlyphs">W02= 104926</text>
<text transform="translate(111,432) scale(1.0,1.0)" fill="#00ff00" font-size="10" font-weight="bold" font-style="italic" textLength="61" lengthAdjust="spacingAndGlyphs">W01= 50175</text>
<text transform="translate(499,120) scale(1.0,0.92)" fill="#ff00ff" font-size="10" font-weight="bold" font-style="italic">Dimensions</text>
<text transform="translate(499,131) scale(1.0,0.92)" fill="#00ffff" font-size="10" font-weight="bold" font-style="italic">t  = 4 mm</text>
<text transform="translate(499,142) scale(1.0,0.92)" fill="#00ffff" font-size="10" font-weight="bold" font-style="italic">h  = 50 mm</text>
<text transform="translate(499,154) scale(1.0,0.92)" fill="#00ffff" font-size="10" font-weight="bold" font-style="italic">Dio = 30 mm</text>
<text transform="translate(499,165) scale(1.0,0.92)" fill="#00ffff" font-size="10" font-weight="bold" font-style="italic">Deu = 75 mm</text>
<text transform="translate(499,177) scale(1.0,0.92)" fill="#00ffff" font-size="10" font-weight="bold" font-style="italic">n  = 4 coils</text>
<text transform="translate(499,188) scale(1.0,0.92)" fill="#00ffff" font-size="10" font-weight="bold" font-style="italic">P = 12,5 mm</text>
<text transform="translate(499,203) scale(1.0,0.92)" fill="#ff00ff" font-size="10" font-weight="bold" font-style="italic">Spring length</text>
<text transform="translate(499,215) scale(1.0,0.92)" fill="#00ffff" font-size="10" font-weight="bold" font-style="italic" textLength="59" lengthAdjust="spacingAndGlyphs">L0 = 100 mm</text>
<text transform="translate(499,226) scale(1.0,0.92)" fill="#00ffff" font-size="10" font-weight="bold" font-style="italic">L1 = 75 mm</text>
<text transform="translate(499,237) scale(1.0,0.92)" fill="#00ffff" font-size="10" font-weight="bold" font-style="italic">L2 = 65 mm</text>
<text transform="translate(499,248) scale(1.0,0.92)" fill="#00ffff" font-size="10" font-weight="bold" font-style="italic">Ln = 61,01 mm</text>
<text transform="translate(499,259) scale(1.0,0.92)" fill="#00ffff" font-size="10" font-weight="bold" font-style="italic">Lc = 50 mm</text>
<text transform="translate(499,275) scale(1.0,0.92)" fill="#ff00ff" font-size="10" font-weight="bold" font-style="italic" textLength="47" lengthAdjust="spacingAndGlyphs">Deflection</text>
<text transform="translate(499,287) scale(1.0,0.92)" fill="#00ffff" font-size="10" font-weight="bold" font-style="italic" textLength="63.5" lengthAdjust="spacingAndGlyphs">sl = 22,73 mm</text>
<text transform="translate(499,298) scale(1.0,0.92)" fill="#00ffff" font-size="10" font-weight="bold" font-style="italic">s1 = 25 mm</text>
<text transform="translate(499,310) scale(1.0,0.92)" fill="#00ffff" font-size="10" font-weight="bold" font-style="italic">s2 = 35 mm</text>
<text transform="translate(499,321) scale(1.0,0.92)" fill="#00ffff" font-size="10" font-weight="bold" font-style="italic">sn = 38,99 mm</text>
<text transform="translate(499,332) scale(1.0,0.92)" fill="#00ffff" font-size="10" font-weight="bold" font-style="italic">sc = 50 mm</text>
<text transform="translate(499,347) scale(1.0,0.92)" fill="#ff00ff" font-size="10" font-weight="bold" font-style="italic">Spring load</text>
<text transform="translate(499,359) scale(1.0,0.92)" fill="#00ffff" font-size="10" font-weight="bold" font-style="italic">F1 = 4151 N</text>
<text transform="translate(499,370) scale(1.0,0.92)" fill="#00ffff" font-size="10" font-weight="bold" font-style="italic">F2 = 6931 N</text>
<text transform="translate(499,382) scale(1.0,0.92)" fill="#00ffff" font-size="10" font-weight="bold" font-style="italic">Fn = 8875 N</text>
<text transform="translate(499,393) scale(1.0,0.92)" fill="#00ffff" font-size="10" font-weight="bold" font-style="italic">Fc = 34261 N</text>
<text transform="translate(499,408) scale(1.0,0.92)" fill="#ff00ff" font-size="10" font-weight="bold" font-style="italic">spring rate</text>
<text transform="translate(499,419) scale(1.0,0.92)" fill="#00ffff" font-size="10" font-weight="bold" font-style="italic">R0 = 165,6 N/mm</text>
<text transform="translate(499,431) scale(1.0,0.92)" fill="#00ffff" font-size="10" font-weight="bold" font-style="italic">R1 = 189,6 N/mm</text>
<text transform="translate(499,442) scale(1.0,0.92)" fill="#00ffff" font-size="10" font-weight="bold" font-style="italic">R2 = 401,8 N/mm</text>
<text transform="translate(499,457) scale(1.0,0.92)" fill="#ff00ff" font-size="10" font-weight="bold" font-style="italic">spring energy</text>
<text transform="translate(499,469) scale(1.0,0.92)" fill="#00ffff" font-size="10" font-weight="bold" font-style="italic" textLength="84.5" lengthAdjust="spacingAndGlyphs">W12 = 54751 Nmm</text>
</svg>
</body></html>
